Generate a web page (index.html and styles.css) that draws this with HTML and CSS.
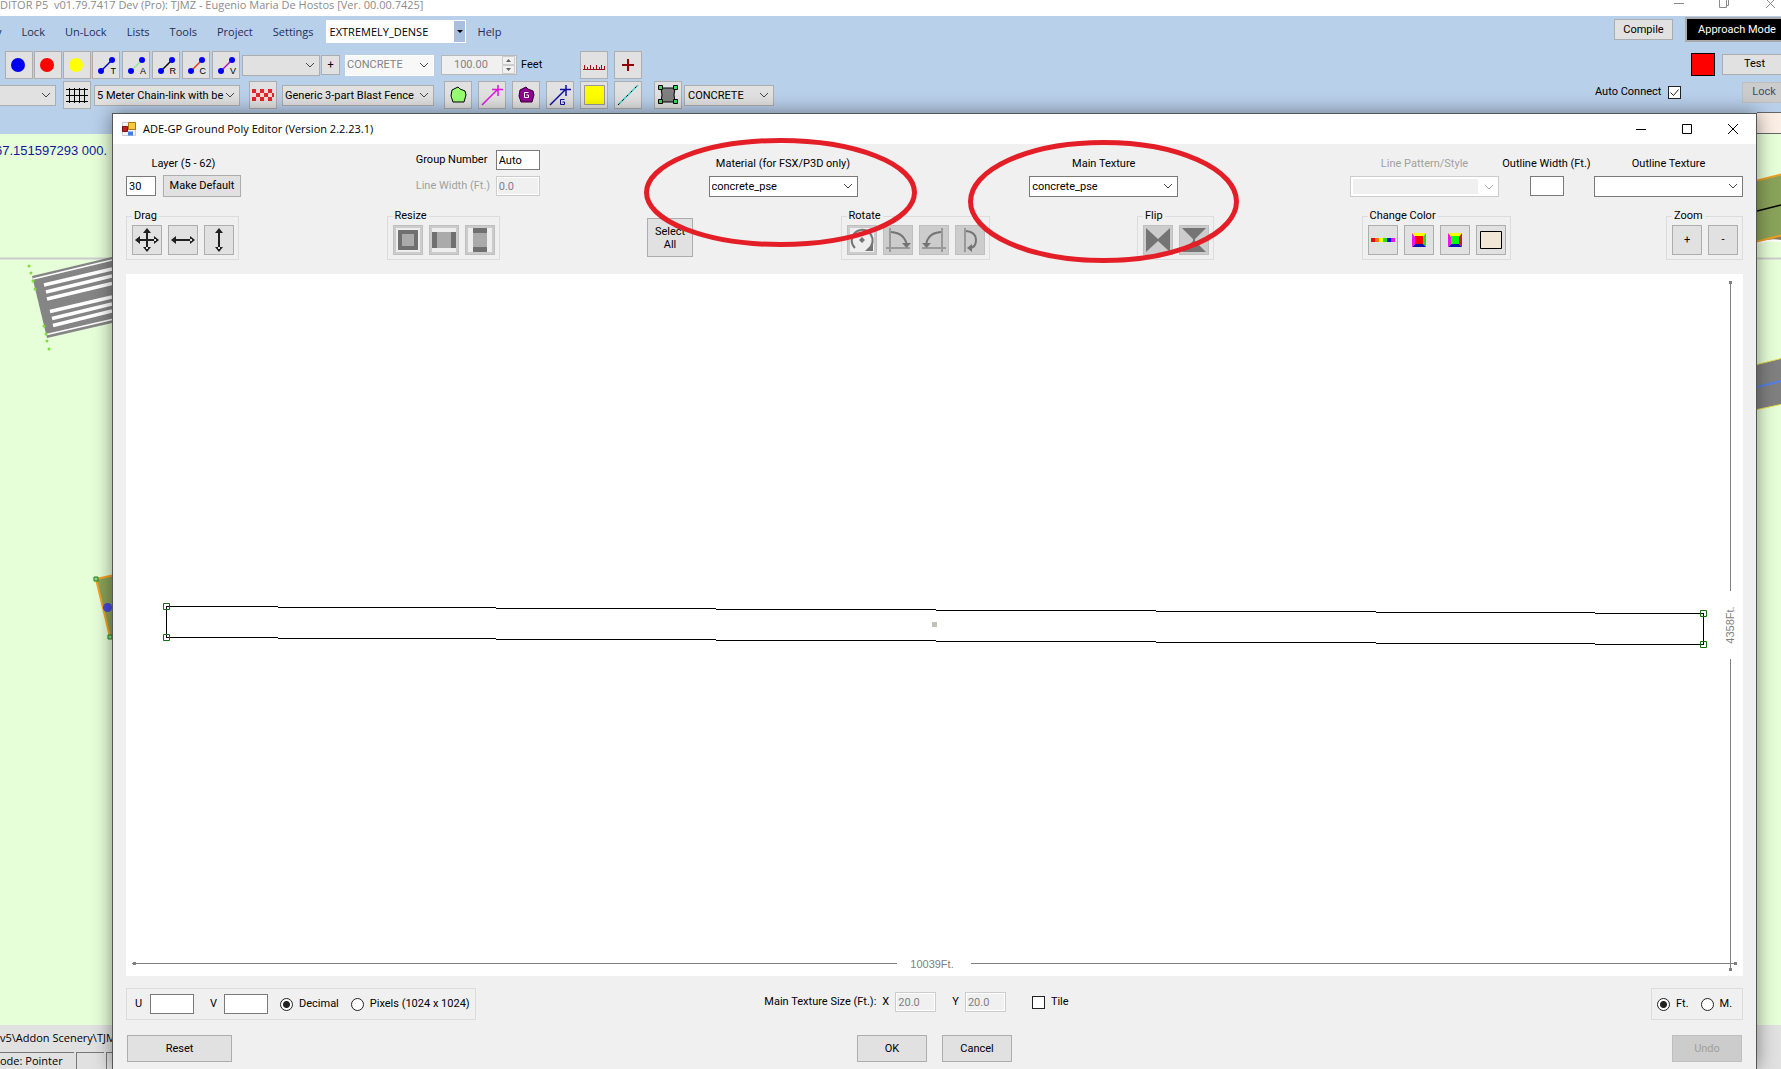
FILE: index.html
```html
<!DOCTYPE html>
<html lang="en">
<head>
<meta charset="utf-8">
<title>ADE-GP Ground Poly Editor</title>
<link rel="stylesheet" href="styles.css">
</head>
<body>
<div class="app">
  <header class="app-title">
    <span>DITOR P5&nbsp; v01.79.7417 Dev (Pro): TJMZ - Eugenio Maria De Hostos [Ver. 00.00.7425]</span>
    <svg class="app-controls" width="110" height="16" viewBox="0 0 110 16" fill="none" stroke="#8a8a8a"><path d="M3 3.500h10M48.500-1.500h7v9h-7zM50.500-1V-3M55.500 5.500h2v-9M95-1l9 9M104-1l-9 9"/></svg>
  </header>

  <div class="bars">
    <div class="bars-left">
      <nav class="menu">
        <a href="#">y</a><a href="#">Lock</a><a href="#">Un-Lock</a><a href="#">Lists</a><a href="#">Tools</a><a href="#">Project</a><a href="#">Settings</a>
        <select class="menu-select" aria-label="Scenery density"><option>EXTREMELY_DENSE</option></select>
        <a href="#">Help</a>
      </nav>

      <div class="toolbar">
        <div class="tools tight">
          <button class="tool" aria-label="Blue point"><svg width="24" height="24"><circle cx="11" cy="12" r="7" fill="#0000f0"/></svg></button>
          <button class="tool" aria-label="Red point"><svg width="24" height="24"><circle cx="11" cy="12" r="7" fill="#f00"/></svg></button>
          <button class="tool" aria-label="Yellow point"><svg width="24" height="24"><circle cx="11" cy="12" r="7" fill="#ff0"/></svg></button>
          <button class="tool link-tool" aria-label="Taxi link"><svg width="24" height="24"><path d="M7 18L18 7" stroke="#0000c8" stroke-width="1.500"/><circle cx="7" cy="18" r="3"/><circle cx="18" cy="7" r="3"/></svg><span>T</span></button>
        </div>
        <div class="tools links">
          <button class="tool link-tool" aria-label="Apron link"><svg width="24" height="24"><path d="M7 18L18 7" stroke="#8ef07a" stroke-width="1.500"/><circle cx="7" cy="18" r="3"/><circle cx="18" cy="7" r="3"/></svg><span>A</span></button>
          <button class="tool link-tool" aria-label="Runway link"><svg width="24" height="24"><path d="M7 18L18 7" stroke="#000" stroke-width="1.500"/><circle cx="7" cy="18" r="3"/><circle cx="18" cy="7" r="3"/></svg><span>R</span></button>
          <button class="tool link-tool" aria-label="Closed link"><svg width="24" height="24"><path d="M7 18L18 7" stroke="#f03010" stroke-width="1.500"/><circle cx="7" cy="18" r="3"/><circle cx="18" cy="7" r="3"/></svg><span>C</span></button>
          <button class="tool link-tool" aria-label="Vehicle link"><svg width="24" height="24"><path d="M7 18L18 7" stroke="#b010c0" stroke-width="1.500"/><circle cx="7" cy="18" r="3"/><circle cx="18" cy="7" r="3"/></svg><span>V</span></button>
        </div>
        <select class="drop name-select" aria-label="Taxiway name"><option></option></select>
        <button class="btn add">+</button>
        <select class="drop surface-select" aria-label="Surface" disabled><option>CONCRETE</option></select>
        <span class="spinner"><input id="feet" type="text" value="100.00" disabled><svg width="13" height="18" fill="#606060" stroke="none"><path d="M0 0h13v18H0z" fill="#f0f0f0"/><path d="M.5.500h12v8H.500zM.500 9.500h12v8H.500z" fill="none" stroke="#ccc"/><path d="M4 6h5L6.500 3zM4 12h5l-2.500 3z"/></svg></span>
        <label class="feet" for="feet">Feet</label>
        <div class="tools pair">
          <button class="tool" aria-label="Ruler"><svg width="24" height="24" stroke="#a01010" shape-rendering="crispEdges"><path d="M1 16.500h22M2.500 16v-4M5.500 16v-2M8.500 16v-4M11.500 16v-2M14.500 16v-4M17.500 16v-2M19.500 16v-4M22.500 16v-3"/></svg></button>
          <button class="tool" aria-label="Add cross"><svg width="24" height="24"><path d="M6 12h12M12 6v12" stroke="#900000" stroke-width="2"/></svg></button>
        </div>
      </div>

      <div class="toolbar">
        <select class="drop cut-select" aria-label="Object type"><option></option></select>
        <button class="tool" aria-label="Chain-link fence"><svg width="24" height="24" stroke="#000" shape-rendering="crispEdges"><path d="M1 6.500h22M1 12.500h22M1 18.500h22M4.500 5v15M9.500 5v15M14.500 5v15M19.500 5v15"/></svg></button>
        <select class="drop fence-select" aria-label="Fence"><option>5 Meter Chain-link with be</option></select>
        <button class="tool blast" aria-label="Blast fence"><svg width="24" height="24"><path d="M1 6h22v12H1z" fill="#f8d8d8"/><path d="M1 6h4v4H1zM9 6h4v4H9zM17 6h4v4h-4zM5 10h4v4H5zM13 10h4v4h-4zM21 10h2v4h-2zM1 14h4v4H1zM9 14h4v4H9zM17 14h4v4h-4z" fill="#e02828"/></svg></button>
        <select class="drop blast-select" aria-label="Blast fence type"><option>Generic 3-part Blast Fence</option></select>
        <div class="tools shapes">
          <button class="tool" aria-label="Polygon"><svg width="24" height="24"><path d="M6 7l6-3 2 2 5 2 1 4-2 7H7L5 13z" fill="#98ff70" stroke="#000"/></svg></button>
          <button class="tool" aria-label="Line"><svg width="24" height="24" stroke="#e010e0" stroke-width="1.500"><path d="M2 22L18 6M12 6.500h11M18 2v11"/></svg></button>
          <button class="tool" aria-label="Ground polygon"><svg width="24" height="24"><path d="M6 7l6-3 2 2 5 2 1 4-2 7H7L5 13z" fill="#900090" stroke="#300030"/><path d="M14.500 9.500h-4v5h4v-2.500h-2" fill="none" stroke="#fff"/></svg></button>
          <button class="tool" aria-label="Ground line"><svg width="24" height="24" stroke="#1010a0" fill="none" stroke-width="1.500"><path d="M2 22L18 6M12 6.500h11M18 2v11"/><path d="M16.500 16.500h-4v5h4v-2.500h-2" stroke-width="1"/></svg></button>
          <button class="tool" aria-label="Fill colour"><svg width="24" height="24"><path d="M2.500 2.500h20v19h-20z" fill="#ff0" stroke="#999"/></svg></button>
          <button class="tool" aria-label="Dashed line"><svg width="24" height="24"><path d="M2 22L22 2" stroke="#40d0d0" stroke-width="1.500"/><path d="M2 22L22 2" stroke="#000" stroke-dasharray="2 4"/></svg></button>
        </div>
        <button class="tool apron" aria-label="Apron"><svg width="24" height="24"><path d="M5 5h14l-1 7 1 7H5l1-7z" fill="#808080" stroke="#000"/><path d="M2.500 2.500h4v4h-4zM17.500 2.500h4v4h-4zM2.500 16.500h4v4h-4zM17.500 16.500h4v4h-4z" fill="#30e050" stroke="#000"/></svg></button>
        <select class="drop apron-select" aria-label="Apron surface"><option>CONCRETE</option></select>
      </div>
    </div>

    <div class="bars-right">
      <div class="right-row top"><button class="btn compile">Compile</button><button class="btn approach">Approach Mode</button></div>
      <div class="right-row mid"><span class="swatch"></span><button class="btn test">Test</button></div>
      <div class="right-row low"><label for="auto">Auto Connect</label><input type="checkbox" id="auto" checked><button class="btn lock" disabled>Lock</button></div>
    </div>
  </div>

  <main class="map">
    <span class="coords">67.151597293 000.</span>
    <svg class="map-left" width="112" height="892" viewBox="0 134 112 892">
      <path d="M0 258.500h112" stroke="#ccc" stroke-width="2"/>
      <path d="M32 276l80-19v66l-65 15z" fill="#858585"/>
      <path d="M33 279l79-19M47 334.500l65-15" stroke="#fff" stroke-width="1.500"/>
      <path d="M44 285l68-16M46 292l66-16M47 299l65-15.500M50 311.500l62-14.500M52 318.500l60-14.500M53 325.500l59-14.500" stroke="#fff" stroke-width="3.500"/>
      <g fill="#7be03c"><circle cx="29" cy="266" r="1.500"/><circle cx="31" cy="273" r="1.500"/><circle cx="33" cy="281" r="1.500"/><circle cx="35" cy="289" r="1.500"/><circle cx="44" cy="326" r="1.500"/><circle cx="46" cy="334" r="1.500"/><circle cx="47" cy="341" r="1.500"/><circle cx="49" cy="349" r="1.500"/></g>
      <path d="M115 575l-19 4 14 58h5" fill="#8aa35a" stroke="#f8a020" stroke-width="2"/>
      <circle cx="107.500" cy="607.500" r="4.500" fill="#4848e0"/>
      <path d="M94 577h4v4h-4zM108 635h4v4h-4z" fill="#80e080" stroke="#208020"/>
    </svg>
    <svg class="map-right" width="24" height="914" viewBox="1757 112 24 914">
      <path d="M1757 112h24v21h-24z" fill="#fbeee4"/><path d="M1757 112.500h24M1757 133.500h24" stroke="#666"/>
      <path d="M1757 241l24-6v6z" fill="#887860"/><path d="M1757 243q14-4 24-2" stroke="#fff" stroke-width="2" fill="none"/>
      <path d="M1755 181l28-7v61l-28 7z" fill="#8aa35a" stroke="#f0a020" stroke-width="2"/>
      <path d="M1757 211l24-6" stroke="#000" stroke-width="1.500"/>
      <path d="M1757 258.500h24" stroke="#ccc" stroke-width="2"/>
      <path d="M1755 365l28-7v46l-28 6z" fill="#808080" stroke="#e8e040"/>
      <path d="M1757 387l24-6" stroke="#5080f0" stroke-width="2"/>
    </svg>
  </main>

  <footer class="status">
    <div class="status-path">v5\Addon Scenery\TJMZ</div>
    <div class="status-cells"><span class="mode">ode: Pointer</span><span class="cell"></span><span class="cell"></span></div>
  </footer>
</div>

<section class="dialog" role="dialog" aria-labelledby="dialog-title">
  <header class="dialog-title">
    <svg width="14" height="14"><path d="M.500.500h13v13H.500z" fill="#f4f4f4" stroke="#ccc"/><path d="M6.500.500h7v7h-7z" fill="#f8c840" stroke="#a87808"/><path d="M.500 4.500h5v5h-5z" fill="#c02020" stroke="#801010"/><path d="M6 9.500h5v4H6z" fill="#4080e0"/></svg>
    <h1 id="dialog-title">ADE-GP Ground Poly Editor (Version 2.2.23.1)</h1>
    <button class="caption" aria-label="Minimize"><svg width="12" height="12"><path d="M1 6.500h10"/></svg></button>
    <button class="caption" aria-label="Maximize"><svg width="12" height="12"><path d="M1.500 1.500h9v9h-9z"/></svg></button>
    <button class="caption" aria-label="Close"><svg width="12" height="12"><path d="M1 1l10 10M11 1L1 11"/></svg></button>
  </header>

  <div class="dialog-body">
    <div class="fields">
      <div class="stack layer">
        <label for="layer">Layer (5 - 62)</label>
        <div class="line"><input class="box w30" id="layer" type="text" value="30"><button class="btn default">Make Default</button></div>
      </div>
      <div class="numbers">
        <label for="group">Group Number</label><input class="box" id="group" type="text" value="Auto">
        <label class="off" for="lw">Line Width (Ft.)</label><input class="box" id="lw" type="text" value="0.0" disabled>
      </div>
      <div class="stack"><label for="material">Material (for FSX/P3D only)</label><select class="combo" id="material"><option>concrete_pse</option></select></div>
      <div class="stack"><label for="texture">Main Texture</label><select class="combo" id="texture"><option>concrete_pse</option></select></div>
      <div class="outline">
        <div class="stack"><label class="off" for="pattern">Line Pattern/Style</label><select class="combo" id="pattern" disabled><option></option></select></div>
        <div class="stack ow"><label for="ow">Outline Width (Ft.)</label><input class="box w34" id="ow" type="text"></div>
        <div class="stack"><label for="ot">Outline Texture</label><select class="combo" id="ot"><option></option></select></div>
      </div>
    </div>

    <div class="groups">
      <fieldset><legend>Drag</legend>
        <button class="sq" aria-label="Drag freely"><svg width="28" height="28" fill="#202020"><path d="M13 5h2v18h-2zM5 13h18v2H5zM14 2l4 5h-8zM14 26l4-5h-8zM2 14l5-4v8zM26 14l-5-4v8z"/></svg></button>
        <button class="sq" aria-label="Drag horizontally"><svg width="28" height="28" fill="#202020"><path d="M5 13h18v2H5zM2 14l5-4v8zM26 14l-5-4v8z"/></svg></button>
        <button class="sq" aria-label="Drag vertically"><svg width="28" height="28" fill="#202020"><path d="M13 5h2v18h-2zM14 2l4 5h-8zM14 26l4-5h-8z"/></svg></button>
      </fieldset>
      <fieldset><legend>Resize</legend>
        <button class="sq" aria-label="Resize both" disabled><svg width="28" height="28"><path d="M2 2h24v24H2z" fill="#eee"/><path d="M4 4h20v20H4z" fill="#707070"/><path d="M8 8h12v12H8z" fill="#aaa"/></svg></button>
        <button class="sq" aria-label="Resize width" disabled><svg width="28" height="28"><path d="M2 2h24v24H2z" fill="#eee"/><path d="M2 6h24v16H2z" fill="#707070"/><path d="M7 6h14v16H7z" fill="#aaa"/></svg></button>
        <button class="sq" aria-label="Resize height" disabled><svg width="28" height="28"><path d="M2 2h24v24H2z" fill="#eee"/><path d="M7 2h14v24H7z" fill="#707070"/><path d="M7 7h14v14H7z" fill="#aaa"/></svg></button>
      </fieldset>
      <button class="btn select-all">Select All</button>
      <fieldset><legend>Rotate</legend>
        <button class="sq" aria-label="Rotate freely" disabled><svg width="28" height="28" fill="none" stroke="#747474" stroke-width="2"><path d="M2 2h24v24H2z" fill="#eee" stroke="none"/><path d="M7 22A10.500 10.500 0 1 1 23 20"/><path d="M14 11l3 3-3 3-3-3z" fill="#747474" stroke="none"/><path d="M25 17v8h-8z" fill="#747474" stroke="none"/></svg></button>
        <button class="sq" aria-label="Rotate right 90" disabled><svg width="28" height="28" fill="none" stroke="#747474" stroke-width="2"><path d="M6 2v24M2 22h24" stroke="#999"/><path d="M7 6q14 1 16 14"/><path d="M18 17h9l-4.500 5z" fill="#747474" stroke="none"/></svg></button>
        <button class="sq" aria-label="Rotate left 90" disabled><svg width="28" height="28" fill="none" stroke="#747474" stroke-width="2"><path d="M22 2v24M2 22h24" stroke="#999"/><path d="M21 6Q7 7 6 20"/><path d="M2 17h9l-4.500 5z" fill="#747474" stroke="none"/></svg></button>
        <button class="sq" aria-label="Rotate 180" disabled><svg width="28" height="28" fill="none" stroke="#747474" stroke-width="2"><path d="M9 2v24" stroke="#999"/><path d="M10 5q10 1 10 9t-7 8"/><path d="M16 18v8l-5-4z" fill="#747474" stroke="none"/></svg></button>
      </fieldset>
      <fieldset><legend>Flip</legend>
        <button class="sq" aria-label="Flip horizontally" disabled><svg width="28" height="28" fill="#747474"><path d="M2 2l12 11L26 2v24L14 15 2 26z"/></svg></button>
        <button class="sq" aria-label="Flip vertically" disabled><svg width="28" height="28" fill="#747474"><path d="M2 2h24L15 13v2l11 11H2l11-11v-2z"/></svg></button>
      </fieldset>
      <fieldset><legend>Change Color</legend>
        <button class="sq" aria-label="Spectrum"><svg width="28" height="28"><path d="M2 12h4v4H2z" fill="#e01010"/><path d="M6 12h4v4H6z" fill="#f07810"/><path d="M10 12h4v4h-4z" fill="#ff0"/><path d="M14 12h4v4h-4z" fill="#20e020"/><path d="M18 12h4v4h-4z" fill="#1010e0"/><path d="M22 12h4v4h-4z" fill="#f010f0"/></svg></button>
        <button class="sq" aria-label="Line colour"><svg width="28" height="28"><path d="M7 7h14l-3 4h-8z" fill="#ff0"/><path d="M21 7v14l-3-3v-7z" fill="#20e020"/><path d="M21 21H7l3-3h8z" fill="#1010b0"/><path d="M7 21V7l3 4v7z" fill="#f010f0"/><path d="M10 10h8v8h-8z" fill="#f00"/></svg></button>
        <button class="sq" aria-label="Fill colour"><svg width="28" height="28"><path d="M7 7h14l-3 4h-8z" fill="#ff0"/><path d="M21 7v14l-3-3v-7z" fill="#e01020"/><path d="M21 21H7l3-3h8z" fill="#1010b0"/><path d="M7 21V7l3 4v7z" fill="#f010f0"/><path d="M10 10h8v8h-8z" fill="#0f0"/></svg></button>
        <button class="sq" aria-label="Current colour"><svg width="28" height="28"><path d="M3.500 5.500h21v17h-21z" fill="#f0e8d4" stroke="#000"/></svg></button>
      </fieldset>
      <fieldset class="zoom"><legend>Zoom</legend><button class="sq">+</button><button class="sq">-</button></fieldset>
    </div>

    <div class="canvas">
      <svg viewBox="0 0 1617 702" width="100%" height="100%" fill="none">
        <g stroke="#808080" shape-rendering="crispEdges">
          <path d="M1604.500 8v309M1604.500 385v311M6 689.500h765M845 689.500h766"/>
          <path d="M1603 8.500h3M1603 695.500h3M8.500 688v3M1609.500 688v3" stroke-width="3"/>
        </g>
        <text x="806" y="694" text-anchor="middle">10039Ft.</text>
        <text x="1608" y="351" text-anchor="middle" transform="rotate(-90 1608 351)">4358Ft.</text>
        <path d="M40.500 332.500L1577.500 339.500V370.500L40.500 363.500z" stroke="#000" shape-rendering="crispEdges"/>
        <path d="M37.500 329.500h6v6h-6zM37.500 360.500h6v6h-6zM1574.500 336.500h6v6h-6zM1574.500 367.500h6v6h-6z" stroke="#107010"/>
        <path d="M806 348h5v5h-5z" fill="#c4c0b4"/>
      </svg>
    </div>

    <div class="options">
      <div class="panel uv">
        <label for="u">U</label><input class="box" id="u" type="text">
        <label class="v" for="v">V</label><input class="box" id="v" type="text">
        <label class="opt"><input type="radio" name="unit" checked>Decimal</label>
        <label class="opt"><input type="radio" name="unit">Pixels (1024 x 1024)</label>
      </div>
      <div class="size">
        <span>Main Texture Size (Ft.):</span>
        <label for="sx">X</label><input class="box" id="sx" type="text" value="20.0" disabled>
        <label class="sy" for="sy">Y</label><input class="box" id="sy" type="text" value="20.0" disabled>
        <label class="opt tile"><input type="checkbox">Tile</label>
      </div>
      <div class="panel measure">
        <label class="opt"><input type="radio" name="measure" checked>Ft.</label>
        <label class="opt"><input type="radio" name="measure">M.</label>
      </div>
    </div>

    <div class="actions">
      <button class="btn reset">Reset</button>
      <div class="confirm"><button class="btn">OK</button><button class="btn">Cancel</button></div>
      <button class="btn undo" disabled>Undo</button>
    </div>
  </div>
</section>

<svg class="marks" width="600" height="130" viewBox="642 136 600 130" fill="none" stroke="#e41e26" stroke-width="5"><ellipse cx="780.500" cy="192.500" rx="134" ry="52"/><ellipse cx="1103.500" cy="201.500" rx="133" ry="59"/></svg>
</body>
</html>
```
FILE: styles.css
```css
* { box-sizing: border-box; }

body {
  margin: 0;
  height: 100vh;
  position: relative;
  overflow: hidden;
  font: 11px/14px Roboto, "Liberation Sans", sans-serif;
  color: #000;
}

button, input, select { font: inherit; color: inherit; margin: 0; border-radius: 0; }
button { padding: 0; }
svg { display: block; flex: none; }

/* main application window */
.app { height: 100%; display: flex; flex-direction: column; }

.app-title {
  display: flex;
  justify-content: space-between;
  height: 16px;
  background: #fff;
  color: #8c8c8c;
  font: 11px/10px "Open Sans", "Noto Sans", sans-serif;
  white-space: nowrap;
  overflow: hidden;
}

.bars { display: flex; justify-content: space-between; height: 118px; background: #b9d0ea; flex: none; }

.menu {
  display: flex;
  align-items: center;
  gap: 20px;
  height: 23px;
  margin: 4px 0 8px -4px;
  font: 11px/16px "Open Sans", "Noto Sans", sans-serif;
}
.menu a { color: #1e2f55; text-decoration: none; }
.menu-select {
  appearance: none;
  width: 140px;
  height: 23px;
  margin: 0 -8px;
  padding: 0 4px;
  border: 0;
  color: #000;
  background: url("data:image/svg+xml,%3Csvg xmlns='http://www.w3.org/2000/svg' width='12' height='23'%3E%3Cpath d='M0 1h11v21H0z' fill='%23a9bfdd'/%3E%3Cpath d='M3 10h6l-3 3z'/%3E%3C/svg%3E") right center no-repeat #fff;
}

.toolbar { display: flex; align-items: center; height: 28px; margin-bottom: 2px; padding-left: 5px; }
.tools { display: flex; }
.tight { gap: 1px; }
.links { gap: 2px; margin-left: 2px; }
.pair { gap: 6px; margin-left: 39px; }
.shapes { gap: 6px; margin-left: 10px; }

.tool {
  position: relative;
  width: 28px;
  height: 28px;
  padding: 1px;
  flex: none;
  border: 1px solid #adadad;
  background: #e1e1e1;
}
.link-tool svg { fill: #0000f0; }
.link-tool span { position: absolute; right: 3px; bottom: 1px; font: 9px/12px "Liberation Sans", sans-serif; }

.drop {
  appearance: none;
  height: 21px;
  padding: 1px 3px 0;
  border: 1px solid #adadad;
  background: url("data:image/svg+xml,%3Csvg xmlns='http://www.w3.org/2000/svg' width='18' height='9'%3E%3Cpath d='M5 2l4 4 4-4' fill='none' stroke='%23444'/%3E%3C/svg%3E") right center no-repeat #e1e1e1;
}
.drop:disabled { color: #838383; background-color: #f8f8f8; border-color: #fff; opacity: 1; }
.name-select { width: 78px; margin-left: 2px; }
.add { width: 19px; height: 20px; margin-left: 1px; }
.surface-select { width: 89px; margin-left: 5px; padding: 0 1px; }

.spinner {
  display: flex;
  width: 76px;
  height: 20px;
  margin-left: 7px;
  border: 1px solid #b8b8b8;
  background: #f0f0f0;
}
.spinner input { width: 60px; padding: 0 12px; border: 0; background: none; color: #838383; }
.feet { margin-left: 4px; width: 20px; }

.cut-select { width: 61px; margin-left: -10px; }
.cut-select + .tool { margin-left: 7px; }
.fence-select { width: 146px; margin-left: 3px; padding-left: 2px; }
.blast { margin-left: 9px; }
.blast-select { width: 152px; margin-left: 5px; padding-left: 2px; }
.apron { margin-left: 12px; }
.apron-select { width: 90px; margin-left: 2px; }

.btn { border: 1px solid #adadad; background: #e1e1e1; text-align: center; }
.btn:disabled { background: #ccc; border-color: #bfbfbf; color: #a0a0a0; }

.bars-right { width: 190px; flex: none; overflow: hidden; }
.right-row { display: flex; align-items: center; }
.right-row > * { flex: none; }
.top { height: 27px; margin: 0 0 9px; padding-left: 23px; gap: 12px; }
.mid { height: 24px; margin-bottom: 5px; padding-left: 100px; gap: 7px; }
.low { height: 22px; padding-left: 4px; }
.low label { width: 73px; }
.compile { width: 59px; height: 21px; }
.approach { width: 104px; height: 25px; border: 2px solid #aaa; background: #000; color: #fff; }
.swatch { width: 24px; height: 23px; border: 1px solid #000; background: #f00; }
.test { width: 65px; height: 21px; }
.lock { width: 44px; height: 21px; margin-left: 61px; }
.lock:disabled { color: #3c4c66; }

input[type="checkbox"], input[type="radio"] {
  appearance: none;
  width: 13px;
  height: 13px;
  flex: none;
  border: 1px solid #222;
  background: #fff;
}
input[type="radio"] { border-radius: 50%; }
input[type="radio"]:checked { background: radial-gradient(circle, #222 3px, #fff 4px); }
input[type="checkbox"]:checked { background: url("data:image/svg+xml,%3Csvg xmlns='http://www.w3.org/2000/svg' width='11' height='11'%3E%3Cpath d='M1.500 5.500l3 3 5-6' fill='none' stroke='%23222'/%3E%3C/svg%3E") #fff; }

.map { position: relative; flex: 1; background: #e7ffd9; }
.coords { position: absolute; left: -5px; top: 10px; color: #1414a0; font: 13px/14px "Liberation Sans", sans-serif; }
.map-left { position: absolute; left: 0; top: 0; }
.map-right { position: absolute; right: 0; top: -22px; }

.status { height: 44px; background: #e1e1e1; font: 11px/16px "Open Sans", "Noto Sans", sans-serif; white-space: nowrap; overflow: hidden; }
.status-path { height: 27px; padding-top: 5px; }
.status-cells { display: flex; gap: 2px; }
.status-cells span { height: 17px; border: solid #777; border-width: 1px 0 0 1px; }
.status-cells .mode { width: 74px; border-left: 0; }
.cell { width: 28px; }

/* ground poly editor dialog */
.dialog {
  position: absolute;
  top: 113px;
  left: 112px;
  right: 24px;
  bottom: 0;
  display: flex;
  flex-direction: column;
  border: solid #555;
  border-width: 1px 1px 0;
  background: #f0f0f0;
  box-shadow: 0 0 18px rgba(0, 0, 0, .45);
}

.dialog-title { display: flex; align-items: center; height: 30px; padding-left: 9px; background: #fff; flex: none; }
.dialog-title h1 { flex: 1; margin: 0 0 0 7px; font: 11px/16px "Open Sans", "Noto Sans", sans-serif; }
.caption { width: 46px; height: 30px; border: 0; background: none; display: flex; align-items: center; justify-content: center; }
.caption svg { fill: none; stroke: #000; }

.dialog-body { flex: 1; display: flex; flex-direction: column; padding: 6px 13px 7px; }

.fields { display: flex; justify-content: space-between; align-items: flex-end; height: 47px; }
.stack { display: flex; flex-direction: column; align-items: center; gap: 5px; white-space: nowrap; }
.line { display: flex; gap: 7px; }
.off { color: #a0a0a0; }

.box { height: 20px; padding: 0 2px; border: 1px solid #7a7a7a; background: #fff; }
.box:disabled { border-color: #ccc; background: #f0f0f0; color: #808080; box-shadow: inset 0 0 0 1px #fff; }
.w30 { width: 30px; }
.w34 { width: 34px; margin-bottom: 1px; }
.default { width: 78px; height: 22px; margin-top: -1px; }
.layer { width: 115px; }
.numbers { display: grid; grid-template-columns: 80px 44px; row-gap: 6px; align-items: center; margin: 0 -3px 1px 3px; white-space: nowrap; }

.combo {
  appearance: none;
  width: 149px;
  height: 21px;
  padding: 0 2px;
  border: 1px solid #7a7a7a;
  background: url("data:image/svg+xml,%3Csvg xmlns='http://www.w3.org/2000/svg' width='14' height='9'%3E%3Cpath d='M1 2l4 4 4-4' fill='none' stroke='%23444'/%3E%3C/svg%3E") right center no-repeat #fff;
}
.combo:disabled {
  border-color: #ccc;
  opacity: 1;
  background: url("data:image/svg+xml,%3Csvg xmlns='http://www.w3.org/2000/svg' width='20' height='19'%3E%3Cpath d='M0 0h20v19H0z' fill='%23fff'/%3E%3Cpath d='M7 8l4 4 4-4' fill='none' stroke='%23aaa'/%3E%3C/svg%3E") right center no-repeat #f0f0f0;
  box-shadow: inset 0 0 0 2px #fff;
}
.outline { display: flex; align-items: flex-end; }
.ow { width: 95px; }

.groups { display: flex; justify-content: space-between; align-items: flex-start; margin: 12px 0 14px; }
fieldset { display: flex; gap: 6px; min-width: 0; margin: 0; padding: 2px 4px 4px 5px; border: 1px solid #dcdcdc; }
legend { padding: 0 2px; line-height: 14px; white-space: nowrap; }
.zoom { margin-left: 8px; }
.sq { width: 30px; height: 30px; border: 1px solid #adadad; background: #e1e1e1; flex: none; }
.sq:disabled { border-color: #bfbfbf; background: #ccc; }
.select-all { width: 46px; height: 39px; padding: 0 6px; margin-top: 9px; line-height: 13px; }

.canvas { position: relative; flex: 1; min-height: 0; background: #fff; overflow: hidden; }
.canvas svg { position: absolute; inset: 0; }
.canvas text { font: 11px "Liberation Sans", sans-serif; fill: #808080; }

.options { display: grid; grid-template-columns: 1fr auto 1fr; align-items: start; margin: 12px 0 15px; white-space: nowrap; }
.panel { display: flex; align-items: center; height: 32px; border: 1px solid #dcdcdc; }
.opt { display: flex; align-items: center; gap: 6px; }
.uv { width: 350px; padding-left: 8px; }
.uv label:first-child { width: 15px; }
.uv .v { margin-left: 16px; width: 14px; }
.uv .box { width: 44px; }
.uv .opt { margin-left: 12px; }
.size { display: flex; align-items: center; height: 28px; margin-right: 36px; }
.size label { margin: 0 6px; }
.size .box { width: 41px; }
.size .sy { margin-left: 16px; }
.size .tile { margin: 0 0 0 26px; }
.measure { width: 92px; justify-self: end; padding-left: 5px; gap: 12px; }

.actions { display: grid; grid-template-columns: 1fr auto 1fr; padding: 0 1px; }
.actions .btn { height: 27px; width: 70px; }
.actions .reset { width: 105px; }
.confirm { display: flex; gap: 15px; }
.actions .undo { justify-self: end; }

/* hand-drawn highlights over the material and texture lists */
.marks { position: absolute; left: 642px; top: 136px; pointer-events: none; }
```
